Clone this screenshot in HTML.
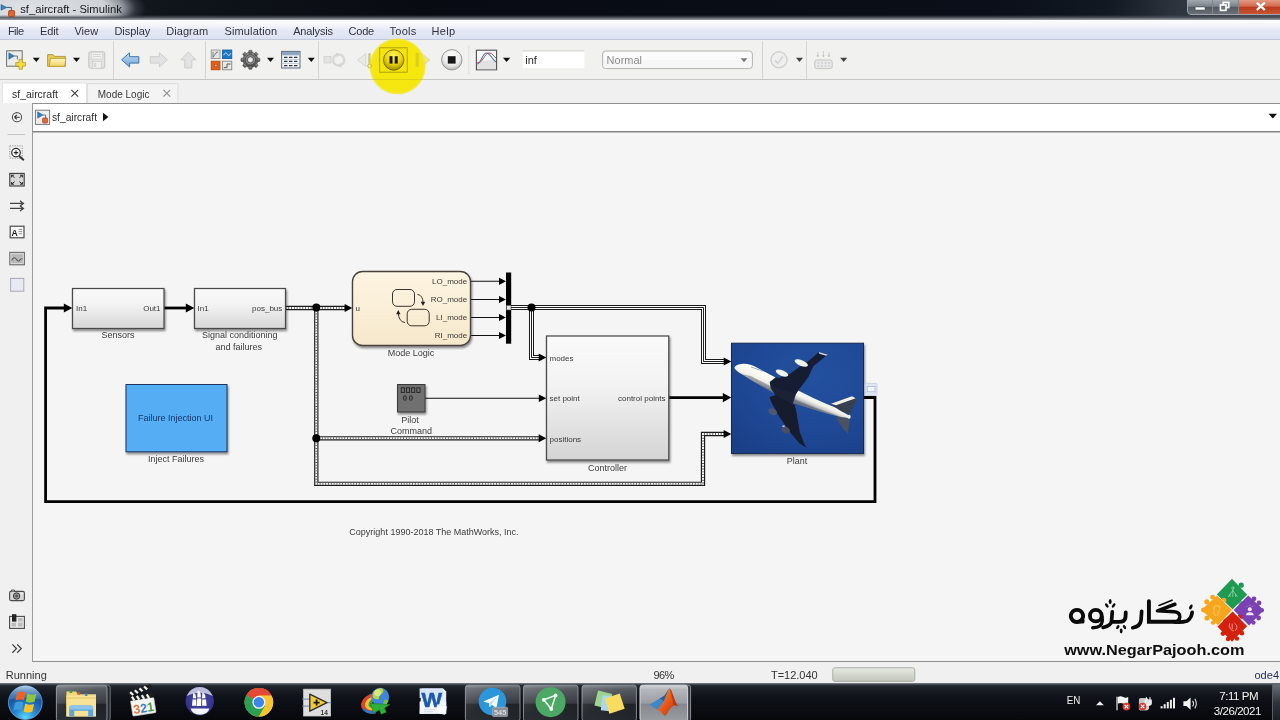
<!DOCTYPE html>
<html>
<head>
<meta charset="utf-8">
<title>sf_aircraft - Simulink</title>
<style>
*{box-sizing:border-box;margin:0;padding:0}
html,body{width:1280px;height:720px;overflow:hidden;background:#f0f0f0;font-family:"Liberation Sans",sans-serif;}
#root{position:relative;width:1280px;height:720px;overflow:hidden;background:#f0f0f0}
.abs{position:absolute}
svg{will-change:transform}
/* ---------- title bar ---------- */
#titlebar{position:absolute;left:0;top:0;width:1280px;height:20px;overflow:hidden;background:linear-gradient(90deg,#20252c 0,#10141b 170px,#080b12 420px,#0a0f19 1000px,#131922 1110px,#2b323c 1170px,#474d55 1280px);}
#titleglow{position:absolute;left:-90px;top:-24px;width:236px;height:64px;background:radial-gradient(ellipse 50% 50% at 50% 50%,rgba(228,231,235,.97) 0,rgba(216,220,225,.95) 66%,rgba(176,182,190,.8) 80%,rgba(96,102,112,.4) 91%,rgba(20,24,30,0) 100%);}
#titleborder{position:absolute;left:0;top:15px;width:1280px;height:5px;background:linear-gradient(rgba(60,65,72,0) 0,rgba(75,80,88,.85) 45%,#7d8289 80%,#a4a8ae 100%)}

/* ---------- menu bar ---------- */
#menubar{position:absolute;left:0;top:20px;width:1280px;height:20px;background:linear-gradient(#fcfdfe 0,#f3f5fb 30%,#e4e8f5 55%,#dde2f3 100%);border-bottom:1px solid #c3c8dc}

/* ---------- toolbar ---------- */
#toolbar{position:absolute;left:0;top:41px;width:1280px;height:39px;background:#f1f1ef;border-bottom:1px solid #c6c6c6}
.tsep{position:absolute;top:0;width:1px;height:38px;background:#d4d4d4}
/* ---------- tabs ---------- */
#tabrow{position:absolute;left:0;top:80px;width:1280px;height:24px;background:#f0f0f0}
/* ---------- left palette ---------- */
#palette{position:absolute;left:0;top:104px;width:33px;height:556px;background:#f0f0f0}
/* ---------- breadcrumb ---------- */
#crumb{position:absolute;left:32px;top:103px;width:1248px;height:28px;background:#fff;border-left:1px solid #9a9a9a;border-top:1px solid #8f8f8f}
/* ---------- canvas ---------- */
#canvas{position:absolute;left:32px;top:131px;width:1248px;height:531px;background:#f5f5f5;border-left:1px solid #9b9b9b;border-top:1px solid #858585;border-bottom:1px solid #8c8c8c;box-shadow:inset 0 1px 0 #bdbdbd}
/* ---------- status bar ---------- */
#status{position:absolute;left:0;top:662px;width:1280px;height:22px;background:#f0f0f0}
#status span{position:absolute;top:6px;font-size:11.5px;color:#333;white-space:nowrap}
/* ---------- taskbar ---------- */
#taskbar{position:absolute;left:0;top:683px;width:1280px;height:37px;background:linear-gradient(#8a9098 0,#4a5058 3%,#20242b 8%,#0e1117 40%,#06080c 100%)}
</style>
</head>
<body>
<div id="root">

<!-- TITLE BAR + MENU BAR -->
<div id="menubar"></div>
<div id="titlebar"><div id="titleglow"></div></div>
<div id="titleborder"></div>
<svg class="abs" style="left:0;top:0" width="1280" height="41" viewBox="0 0 1280 41" font-family="Liberation Sans, sans-serif">
<defs>
<linearGradient id="gwb" x1="0" y1="0" x2="0" y2="1"><stop offset="0" stop-color="#a4a9b0"/><stop offset=".45" stop-color="#7d838b"/><stop offset=".5" stop-color="#545a63"/><stop offset="1" stop-color="#6a7078"/></linearGradient>
<linearGradient id="gwx" x1="0" y1="0" x2="0" y2="1"><stop offset="0" stop-color="#e59a84"/><stop offset=".45" stop-color="#d2694c"/><stop offset=".5" stop-color="#b93a1e"/><stop offset="1" stop-color="#c8552f"/></linearGradient>
</defs>
<!-- title icon -->
<path d="M1 4.6l5.8 2.8L1 10.2z" fill="#2f86cc" stroke="#1d5e98" stroke-width=".6"/>
<path d="M6.8 7.4h4.6v3.4" fill="none" stroke="#444" stroke-width=".9"/>
<rect x="8.6" y="10.6" width="6" height="6" rx=".8" fill="#e0682f" stroke="#9c3f14" stroke-width=".8"/>
<text x="20.2" y="12.8" font-size="11.2" fill="#16181c" textLength="101.6" lengthAdjust="spacingAndGlyphs">sf_aircraft - Simulink</text>
<!-- window buttons -->
<path d="M1187 0V11q0 4 4 4H1280V0z" fill="#2b3038" opacity=".9"/>
<path d="M1188 0V10.6q0 3.4 3.4 3.4H1212V0z" fill="url(#gwb)"/>
<rect x="1213" y="0" width="25" height="14" fill="url(#gwb)"/>
<rect x="1239" y="0" width="41" height="14" fill="url(#gwx)"/>
<path d="M1187.5 0V11q0 3.5 3.5 3.5H1280" fill="none" stroke="#c9ccd1" stroke-width="1" opacity=".75"/>
<path d="M1212.5 0V14M1238.5 0V14" stroke="#c9ccd1" stroke-width="1" opacity=".55"/>
<rect x="1195.2" y="7" width="9.8" height="3" rx=".6" fill="#fff" stroke="#3a3f46" stroke-width=".5"/>
<g fill="none" stroke="#fff" stroke-width="1.6"><rect x="1223.2" y="2.4" width="5.6" height="5.2"/><rect x="1220.4" y="5" width="5.6" height="5.4" fill="#6b7179"/></g>
<path d="M1256.8 2.6l8 7.4M1264.8 2.6l-8 7.4" stroke="#fff" stroke-width="2.3"/>
<!-- menu text -->
<g font-size="11" fill="#34343f" lengthAdjust="spacingAndGlyphs">
<text x="7.9" y="34.6" textLength="16.2">File</text>
<text x="40" y="34.6" textLength="18.6">Edit</text>
<text x="74.4" y="34.6" textLength="23.8">View</text>
<text x="114.4" y="34.6" textLength="35.8">Display</text>
<text x="166.3" y="34.6" textLength="41.8">Diagram</text>
<text x="224.4" y="34.6" textLength="52.8">Simulation</text>
<text x="293.2" y="34.6" textLength="39.8">Analysis</text>
<text x="348.4" y="34.6" textLength="25.8">Code</text>
<text x="389.6" y="34.6" textLength="26.6">Tools</text>
<text x="431.4" y="34.6" textLength="23.8">Help</text>
</g>
</svg>


<!-- TOOLBAR -->
<div id="toolbar">
<div class="tsep" style="left:113px"></div>
<div class="tsep" style="left:205px"></div>
<div class="tsep" style="left:318px"></div>
<div class="tsep" style="left:762px"></div>
<div class="tsep" style="left:806px"></div>
</div>

<!-- TABS -->
<div id="tabrow"></div>

<!-- PALETTE -->
<div id="palette"></div>

<!-- BREADCRUMB -->
<div id="crumb"></div>

<!-- CANVAS -->
<div id="canvas"></div>

<!-- DIAGRAM -->
<svg id="diagram" class="abs" style="left:0;top:0" width="1280" height="720" viewBox="0 0 1280 720" font-family="Liberation Sans, sans-serif">
<defs>
<linearGradient id="gblk" x1="0" y1="0" x2="0" y2="1"><stop offset="0" stop-color="#fbfbfb"/><stop offset=".45" stop-color="#f1f1f1"/><stop offset="1" stop-color="#d6d6d6"/></linearGradient>
<linearGradient id="gctl" x1="0" y1="0" x2="0" y2="1"><stop offset="0" stop-color="#fafafa"/><stop offset=".4" stop-color="#f3f3f3"/><stop offset="1" stop-color="#d4d4d4"/></linearGradient>
<linearGradient id="gsf" x1="0" y1="0" x2="0" y2="1"><stop offset="0" stop-color="#fdf4e2"/><stop offset="1" stop-color="#f6e8cb"/></linearGradient>
<filter id="sh" x="-10%" y="-10%" width="125%" height="130%"><feGaussianBlur in="SourceAlpha" stdDeviation="1.2"/><feOffset dx="1.2" dy="1.5"/><feComponentTransfer><feFuncA type="linear" slope=".45"/></feComponentTransfer><feMerge><feMergeNode/><feMergeNode in="SourceGraphic"/></feMerge></filter>
</defs>

<!-- feedback loop (thick) -->
<g fill="none" stroke="#000" stroke-width="2.8" stroke-linejoin="miter">
<path d="M863.5 397.5H875V501.6H45.6V308H66"/>
<path d="M164 308H188"/>
<path d="M669 397.6H724"/>
</g>
<g fill="#000">
<path d="M72.3 308l-8.5-4.6v9.2z"/>
<path d="M194.3 308l-8.5-4.6v9.2z"/>
<path d="M731.3 397.6l-8.5-4.6v9.2z"/>
</g>

<!-- dotted bus -->
<g fill="none" stroke-linejoin="miter">
<g stroke="#1a1a1a" stroke-width="4.3">
<path d="M285.5 308H346"/>
<path d="M316.3 308V483.8H703V434H725"/>
<path d="M316.3 438.3H540"/>
</g>
<g stroke="#fff" stroke-width="2">
<path d="M285.5 308H346"/>
<path d="M316.3 308V483.8H703V434H725"/>
<path d="M316.3 438.3H540"/>
</g>
<g stroke="#5a5a5a" stroke-width="2" stroke-dasharray="0.9 1.9">
<path d="M285.5 308H346"/>
<path d="M316.3 308V483.8H703V434H725"/>
<path d="M316.3 438.3H540"/>
</g>
</g>
<g fill="#000">
<path d="M352.3 308l-7.6-4v8z"/>
<path d="M546.3 438.3l-7.6-4v8z"/>
<path d="M731.3 434l-7.6-4v8z"/>
<circle cx="316.3" cy="307.6" r="4"/>
<circle cx="316.3" cy="438.3" r="4"/>
</g>

<!-- triple (bus) line -->
<g fill="none" stroke-linejoin="miter">
<g stroke="#1a1a1a" stroke-width="5"><path d="M511 307.5H703.5V361.5H725"/><path d="M531.5 307.5V357.5H540"/></g>
<g stroke="#fff" stroke-width="3"><path d="M511 307.5H703.5V361.5H725"/><path d="M531.5 307.5V357.5H540"/></g>
<g stroke="#222" stroke-width="1"><path d="M511 307.5H703.5V361.5H725"/><path d="M531.5 307.5V357.5H540"/></g>
</g>
<g fill="#000">
<path d="M731.3 361.5l-7.6-4v8z"/>
<path d="M546.3 357.5l-7.6-4v8z"/>
<circle cx="531.5" cy="307.5" r="4"/>
</g>

<!-- thin signal lines -->
<g fill="none" stroke="#111" stroke-width="1.1">
<path d="M470.5 281.3H500M470.5 299.5H500M470.5 317.5H500M470.5 335.5H500"/>
<path d="M425 398.3H540"/>
</g>
<g fill="#000">
<path d="M506 281.3l-7-3.6v7.2z"/>
<path d="M506 299.5l-7-3.6v7.2z"/>
<path d="M506 317.5l-7-3.6v7.2z"/>
<path d="M506 335.5l-7-3.6v7.2z"/>
<path d="M546.3 398.3l-7.5-3.8v7.6z"/>
</g>

<!-- Mux -->
<rect x="506" y="272.5" width="5.2" height="71.2" fill="#000"/>
<rect x="506.6" y="305.4" width="4.4" height="4.6" fill="#e8e8e8" stroke="#555" stroke-width=".6"/>

<!-- blocks -->
<g filter="url(#sh)">
<rect x="72.5" y="288.5" width="91.5" height="40" fill="url(#gblk)" stroke="#484848" stroke-width="1.25"/>
<rect x="194.5" y="288.5" width="91" height="40" fill="url(#gblk)" stroke="#484848" stroke-width="1.25"/>
<rect x="546.5" y="336" width="122.3" height="124" fill="url(#gctl)" stroke="#484848" stroke-width="1.25"/>
<rect x="352.5" y="271.5" width="118" height="74" rx="10" ry="10" fill="url(#gsf)" stroke="#46413a" stroke-width="1.35"/>
<rect x="126" y="384.5" width="101" height="67.3" fill="#55adf3" stroke="#1c3461" stroke-width="1"/>
<rect x="397.5" y="384.5" width="27.5" height="27.5" fill="#707070" stroke="#383838" stroke-width="1"/>
<rect x="731.5" y="343.2" width="132" height="110.2" fill="#1f4a98" stroke="#15274d" stroke-width="1"/>
</g>

<!-- plant badge -->
<rect x="865.2" y="383.400" width="11.800" height="12" rx="1" fill="#dfe7f4" stroke="#c2cde0" stroke-width=".8"/>
<rect x="867.200" y="386.400" width="7.800" height="5.400" fill="#f2f6fb" stroke="#a9b9d4" stroke-width=".8"/>
<!-- stateflow icon -->
<g fill="none" stroke="#3a362c" stroke-width="1">
<rect x="392.5" y="289.5" width="22" height="16.8" rx="4.5"/>
<rect x="407.2" y="309.3" width="22" height="16.5" rx="4.5"/>
<path d="M417.5 294.3Q423.2 295.5 423 303"/>
<path d="M405 322.6Q398.6 321.5 398.3 313"/>
</g>
<path d="M423 306l-2.2-4.2h4.4z" fill="#222"/>
<path d="M398.3 310l-2.2 4.2h4.4z" fill="#222"/>

<!-- pilot command display -->
<g fill="none" stroke="#222" stroke-width=".9">
<rect x="401.2" y="387.8" width="3.2" height="4.6"/><rect x="406.4" y="387.8" width="3.2" height="4.6"/><rect x="411.6" y="387.8" width="3.2" height="4.6"/><rect x="416.8" y="387.8" width="3.2" height="4.6"/>
<rect x="403.6" y="395.8" width="2.6" height="4.4" rx="1"/><rect x="409.6" y="395.8" width="2.6" height="4.4" rx="1"/>
</g>

<!-- text -->
<g font-size="8" fill="#3a3a3a">
<text x="76" y="311">In1</text>
<text x="160.5" y="311" text-anchor="end">Out1</text>
<text x="197.5" y="311">In1</text>
<text x="282.3" y="311" text-anchor="end">pos_bus</text>
<text x="355.5" y="311">u</text>
<text x="467.2" y="284.2" text-anchor="end">LO_mode</text>
<text x="467.2" y="302.4" text-anchor="end">RO_mode</text>
<text x="467.2" y="320.4" text-anchor="end">LI_mode</text>
<text x="467.2" y="338.4" text-anchor="end">RI_mode</text>
<text x="549.5" y="360.7">modes</text>
<text x="549.5" y="401.2">set point</text>
<text x="549.5" y="441.7">positions</text>
<text x="665.6" y="401.2" text-anchor="end">control points</text>
</g>
<g font-size="9" fill="#3c3c3c" text-anchor="middle">
<text x="118" y="338.4">Sensors</text>
<text x="239.8" y="338.4">Signal conditioning</text>
<text x="238.8" y="349.8">and failures</text>
<text x="176" y="462">Inject Failures</text>
<text x="411" y="355.6">Mode Logic</text>
<text x="410" y="422.8">Pilot</text>
<text x="411.2" y="433.6">Command</text>
<text x="607.5" y="471">Controller</text>
<text x="797" y="464.4">Plant</text>
<text x="434" y="535.3">Copyright 1990-2018 The MathWorks, Inc.</text>
<text x="175.5" y="421.2" fill="#163768">Failure Injection UI</text>
</g>
</svg>

<!-- PLANE PHOTO -->
<svg class="abs" style="left:732px;top:343.7px" width="131" height="109.2" viewBox="36 34 786 655" preserveAspectRatio="none">
<defs>
<radialGradient id="sky" cx=".62" cy=".3" r=".85"><stop offset="0" stop-color="#23519f"/><stop offset=".55" stop-color="#1f4996"/><stop offset="1" stop-color="#1a3f87"/></radialGradient>
<linearGradient id="fus" gradientUnits="userSpaceOnUse" x1="0" y1="108" x2="-33" y2="187"><stop offset="0" stop-color="#fdfcf5"/><stop offset=".6" stop-color="#f3f2ea"/><stop offset=".82" stop-color="#c4c6c8"/><stop offset="1" stop-color="#7d8492"/></linearGradient>
<filter id="pblur" x="-5%" y="-5%" width="110%" height="110%"><feGaussianBlur stdDeviation="3.2"/></filter>
</defs>
<rect x="36" y="34" width="786" height="655" fill="url(#sky)"/>
<g filter="url(#pblur)">
<!-- far stabilizer -->
<path d="M660 468L742 478L732 572L700 540L672 498Z" fill="#4a5162"/>
<!-- lower (near) wing -->
<path d="M262 352L305 338L412 398L424 450L442 560L472 640L484 658L440 630L380 558L318 468L272 384Z" fill="#141b2e"/>
<ellipse cx="280" cy="440" rx="26" ry="18" transform="rotate(25 280 440)" fill="#4e586d"/>
<ellipse cx="358" cy="550" rx="26" ry="20" transform="rotate(30 358 550)" fill="#465066"/>
<ellipse cx="345" cy="528" rx="9" ry="6" fill="#aeb4bf"/>
<!-- fuselage -->
<path d="M50 176Q58 158 100 153Q140 150 190 178L300 236L430 312L520 356L600 392L660 416L712 448L745 468L742 480L690 472L600 450L520 426L440 400L380 380L300 336L230 296L160 256L95 216Q60 196 50 176Z" fill="url(#fus)"/>
<!-- belly shadow -->
<path d="M95 216L160 256L230 296L300 336L380 380L440 400L520 426L600 450L690 472L640 452L540 418L440 380L330 322L240 272L150 226Z" fill="#59606f" opacity=".45"/>
<!-- wing root dark band -->
<path d="M262 262L300 232L440 300L420 336L400 392L300 346L268 300Z" fill="#1a2236"/>
<!-- upper (far) wing -->
<path d="M282 256L330 232L384 212L440 172L500 132L556 84L612 98L592 112L524 168L494 232L442 302L418 332L300 300L268 270Z" fill="#161e33"/>
<path d="M556 82L612 98L600 104L560 92Z" fill="#cfd5e0"/>
<!-- upper engines -->
<ellipse cx="336" cy="208" rx="40" ry="17" transform="rotate(22 336 208)" fill="#f3f2ea"/>
<ellipse cx="452" cy="148" rx="42" ry="17" transform="rotate(22 452 148)" fill="#f3f2ea"/>
<!-- cockpit windows hint -->
<path d="M150 172L225 198" stroke="#5d79b5" stroke-width="5" fill="none" opacity=".7"/>
<!-- tail fin -->
<path d="M630 392L756 348L786 366L742 456L700 442L652 412Z" fill="#39404f"/>
<path d="M630 392L756 348L778 360L660 402Z" fill="#f2f2ec"/>
<ellipse cx="738" cy="470" rx="10" ry="12" fill="#f2f1ea"/>
</g>
</svg>

<!-- TOOLBAR ICONS + TABS + CRUMB -->
<svg id="tb" class="abs" style="left:0;top:0" width="1280" height="135" viewBox="0 0 1280 135" font-family="Liberation Sans, sans-serif">
<defs>
<linearGradient id="gfold" x1="0" y1="0" x2="0" y2="1"><stop offset="0" stop-color="#fff6c8"/><stop offset="1" stop-color="#f0d060"/></linearGradient>
<linearGradient id="gback" x1="0" y1="0" x2="0" y2="1"><stop offset="0" stop-color="#c6def2"/><stop offset="1" stop-color="#6fa3d6"/></linearGradient>
<radialGradient id="gstop" cx=".5" cy=".35" r=".7"><stop offset="0" stop-color="#ffffff"/><stop offset=".6" stop-color="#ececec"/><stop offset="1" stop-color="#a8a8a8"/></radialGradient>
<radialGradient id="gpause" cx=".5" cy=".3" r=".75"><stop offset="0" stop-color="#fff26a"/><stop offset=".55" stop-color="#e8d400"/><stop offset="1" stop-color="#8d7f00"/></radialGradient>
<radialGradient id="gyel" cx=".5" cy=".5" r=".5"><stop offset="0" stop-color="#f6e70a"/><stop offset=".9" stop-color="#f5e610"/><stop offset=".97" stop-color="#f5e610" stop-opacity=".7"/><stop offset="1" stop-color="#f5e610" stop-opacity="0"/></radialGradient>
<linearGradient id="ggear" x1="0" y1="0" x2="0" y2="1"><stop offset="0" stop-color="#9a9a9a"/><stop offset="1" stop-color="#4a4a4a"/></linearGradient>
</defs>

<!-- new model -->
<rect x="6.6" y="50.8" width="15.6" height="15.4" fill="#ececec" stroke="#6e6e6e" stroke-width="1"/>
<path d="M8.8 52.8l5.6 3.2-5.6 3.2z" fill="#2d7fc4" stroke="#1d5e98" stroke-width=".5"/>
<path d="M14.4 56h3v3.4" fill="none" stroke="#555" stroke-width=".8"/>
<path d="M19 59.4h3.4v3.2h3.2v3.4h-3.2v3.2H19v-3.2h-3.2v-3.4H19z" fill="#f5dc4a" stroke="#b89a18" stroke-width=".8"/>
<path d="M32.8 57.8h7l-3.5 4.2z" fill="#111"/>
<!-- open folder -->
<path d="M47.6 66.4V54.6h5.4l1.6 1.8h10.8v10z" fill="#e9c94f" stroke="#a88c28" stroke-width=".8"/>
<path d="M49.2 66.4l1.2-8h15.6l-1.4 8z" fill="url(#gfold)" stroke="#b39a34" stroke-width=".8"/>
<path d="M73 57.8h7l-3.5 4.2z" fill="#111"/>
<!-- save (disabled) -->
<g opacity=".75">
<rect x="88.8" y="51.8" width="16" height="16.4" rx="1.5" fill="#dcdcdc" stroke="#b4b4b4" stroke-width="1"/>
<rect x="91.4" y="52.6" width="10.8" height="6.4" fill="#f2f2f2" stroke="#c0c0c0" stroke-width=".6"/>
<path d="M92.6 54.6h8.4M92.6 56.6h8.4" stroke="#bdbdbd" stroke-width=".8"/>
<rect x="92.4" y="61.6" width="8.8" height="6.6" fill="#efefef" stroke="#bcbcbc" stroke-width=".6"/>
<rect x="93.6" y="62.8" width="2.6" height="4.4" fill="#cfcfcf"/>
</g>
<!-- back / fwd / up -->
<path d="M121.6 59.8l8-7v3.9h9.2v6.4h-9.2v3.9z" fill="url(#gback)" stroke="#3f72a8" stroke-width="1" stroke-linejoin="round"/>
<path d="M167.4 59.8l-8-7v3.9h-9.2v6.4h9.2v3.9z" fill="#e2e2e2" stroke="#cdcdcd" stroke-width="1" stroke-linejoin="round"/>
<path d="M188.3 51.8l7.4 8h-3.9v8.2h-7v-8.2h-3.9z" fill="#e2e2e2" stroke="#cdcdcd" stroke-width="1" stroke-linejoin="round"/>
<!-- library browser -->
<rect x="211.2" y="50" width="8.8" height="8.6" fill="#e4e4e4" stroke="#8a8a8a" stroke-width=".8"/>
<path d="M213 57.4v-5.6M213 57.4l3-4.6 1.2 0v-1.4" fill="none" stroke="#666" stroke-width=".8"/>
<rect x="222.4" y="50" width="9.4" height="8.6" fill="#1e78c8" stroke="#135a9c" stroke-width=".8"/>
<path d="M223.6 55.2q1.8-4 3.6-1t3.6-1" fill="none" stroke="#bfe0ff" stroke-width="1"/>
<rect x="211.2" y="61.2" width="8.8" height="8.6" fill="#e4601a" stroke="#b24308" stroke-width=".8"/>
<rect x="214.4" y="64.2" width="2.6" height="2.6" fill="#f9b48a" stroke="#a03a04" stroke-width=".5"/>
<rect x="222.4" y="61.2" width="9.4" height="8.6" fill="#e8e8e8" stroke="#7c7c7c" stroke-width=".8"/>
<path d="M223.8 67.6h3.2v-3.6h3.6" fill="none" stroke="#555" stroke-width="1"/>
<!-- gear -->
<g transform="translate(250.4 59.8)">
<g fill="url(#ggear)" stroke="#3c3c3c" stroke-width=".5">
<circle r="7.6"/>
<g id="teeth"><rect x="-1.7" y="-9.5" width="3.4" height="3" rx=".8"/><rect x="-1.7" y="6.5" width="3.4" height="3" rx=".8"/><rect x="-9.5" y="-1.7" width="3" height="3.4" rx=".8"/><rect x="6.5" y="-1.7" width="3" height="3.4" rx=".8"/></g>
<use href="#teeth" transform="rotate(45)"/>
</g>
<circle r="5.2" fill="#8c8c8c" stroke="#3a3a3a" stroke-width=".7"/>
<circle r="3.1" fill="#d9d9d9" stroke="#444" stroke-width=".8"/>
<circle r="1.5" fill="#f4f4f4"/>
</g>
<path d="M267 57.8h7l-3.5 4.2z" fill="#111"/>
<!-- model explorer -->
<rect x="281.6" y="51.4" width="18.4" height="16.6" fill="#f4f6f8" stroke="#5a6a7e" stroke-width="1"/>
<rect x="282.1" y="51.9" width="17.4" height="3.4" fill="#8fa6c0"/>
<path d="M281.6 59.4h18.4M281.6 63.4h18.4" stroke="#a9b8c9" stroke-width=".7"/>
<path d="M284 57.4h3.4M289 57.4h3.4M294 57.4h3.4M284 61.4h3.4M289 61.4h3.4M294 61.4h3.4M284 65.6h3.4M289 65.6h3.4M294 65.6h3.4" stroke="#2b3440" stroke-width="1.2"/>
<path d="M307.8 57.8h7l-3.5 4.2z" fill="#111"/>
<!-- update diagram (disabled) -->
<g opacity=".8">
<rect x="324" y="56.4" width="7" height="6.6" fill="#e0e0e0" stroke="#c9c9c9" stroke-width=".8"/>
<circle cx="338.6" cy="60" r="5.6" fill="none" stroke="#d2d2d2" stroke-width="2.4"/>
<path d="M336 52.4l4.4 2.2-3.8 2.8zM341.4 67.8l-4.4-2.2 3.8-2.8z" fill="#d0d0d0"/>
</g>
<!-- step back (disabled) -->
<path d="M357.4 60l8.4-6.4v12.8z" fill="#e8e8e8" stroke="#d2d2d2" stroke-width=".8"/>
<rect x="368.2" y="53.2" width="2.4" height="10.4" fill="#d4d4d4"/>
<circle cx="369.6" cy="66" r="2" fill="none" stroke="#cfcfcf" stroke-width="1"/>
<!-- step fwd (disabled) -->
<rect x="415.6" y="53" width="3.2" height="13.6" fill="#dcdcdc"/>
<path d="M430 60l-8.6-6.6v13.2z" fill="#e8e8e8" stroke="#d2d2d2" stroke-width=".8"/>
<!-- yellow cursor highlight -->
<circle cx="397.6" cy="66.4" r="28.4" fill="url(#gyel)"/>
<!-- faint things visible through yellow -->
<path d="M357.4 60l8.4-6.4v12.8z" fill="#e9de3c" opacity=".0"/>
<rect x="368.4" y="53.2" width="2.2" height="10.4" fill="#cfc328" opacity=".6"/>
<circle cx="369.8" cy="66" r="2" fill="none" stroke="#bfb320" stroke-width="1" opacity=".7"/>
<rect x="415.6" y="53" width="3.2" height="13.6" fill="#d6c91c" opacity=".8"/>
<path d="M424 55l5.6 5-5.6 5" fill="#efe24a" opacity=".55"/>
<path d="M373 79.5h49.4" stroke="#d8cb1a" stroke-width="1" opacity=".8"/>
<!-- pause button -->
<rect x="379.6" y="47.8" width="27.6" height="24.4" fill="#f2e000" fill-opacity=".25" stroke="#a89a12" stroke-width=".9"/>
<circle cx="393.7" cy="60" r="10.2" fill="url(#gpause)" stroke="#6e6400" stroke-width=".9"/>
<rect x="389.5" y="56.2" width="3" height="7.4" fill="#1a1700"/>
<rect x="394.7" y="56.2" width="3" height="7.4" fill="#1a1700"/>
<!-- stop -->
<circle cx="451.8" cy="59.8" r="10.2" fill="url(#gstop)" stroke="#8e8e8e" stroke-width=".9"/>
<rect x="447.8" y="56.2" width="7.8" height="7.4" fill="#161616"/>
<path d="M468.8 45.6v28.8" stroke="#dcdcdc" stroke-width="1"/>
<!-- scope -->
<rect x="476.4" y="50.2" width="20.2" height="19.6" fill="#fafafa" stroke="#4c4c4c" stroke-width="1.1"/>
<path d="M477 62l19 -3v10.2h-19z" fill="#e2e2e2"/>
<path d="M477.4 64c4-1 5-11 9-11s5 6 9.6 9" fill="none" stroke="#3b76b4" stroke-width="1.1"/>
<path d="M477.4 62.4c5 2 7-9.4 11.4-9.4s4 3 7.2 5" fill="none" stroke="#c24a4a" stroke-width="1"/>
<path d="M503 57.8h7.2l-3.6 4.2z" fill="#111"/>
<!-- inf box -->
<rect x="522.6" y="51" width="61.8" height="17" fill="#fff"/>
<path d="M522.6 50.9h61.8" stroke="#cfcfcf" stroke-width="1"/>
<text x="525.2" y="64.4" font-size="11" fill="#2a2a2a">inf</text>
<!-- normal combo -->
<rect x="602.6" y="51" width="149.8" height="17.6" rx="3" fill="#f6f6f6" stroke="#b3b3b3" stroke-width="1"/>
<rect x="603.6" y="52" width="147.8" height="8" rx="2" fill="#fbfbfb"/>
<text x="606.6" y="64.4" font-size="11" fill="#8c8c8c">Normal</text>
<path d="M740.6 58.2h6.8l-3.4 4z" fill="#7a7a7a"/>
<!-- check -->
<circle cx="779" cy="59.8" r="8" fill="#efefef" stroke="#d0d0d0" stroke-width="1.4"/>
<path d="M775 60.4l2.8 3 5-7" fill="none" stroke="#d4d4d4" stroke-width="1.6"/>
<path d="M796 57.8h7l-3.5 4.2z" fill="#444"/>
<!-- keyboard thing -->
<rect x="814.8" y="60" width="17.4" height="8.6" rx="2" fill="#eaeaea" stroke="#c4c4c4" stroke-width="1"/>
<path d="M817.4 63h2M821 63h2M824.6 63h2M828.2 63h2M817.4 66h2M821 66h2M824.6 66h2M828.2 66h2" stroke="#bdbdbd" stroke-width="1.2"/>
<path d="M817.8 52v5M823.4 51v6M829 52v5" stroke="#cdcdcd" stroke-width="1"/>
<path d="M816.4 55.2h2.8l-1.4 2zM822 55.2h2.8l-1.4 2zM827.6 55.2h2.8l-1.4 2z" fill="#c4c4c4"/>
<path d="M840.2 57.8h7l-3.5 4.2z" fill="#444"/>

<!-- TABS -->
<rect x="2.6" y="83" width="84" height="20" fill="#fff"/>
<path d="M2.6 103V83h84v20" fill="none" stroke="#e2e2e2" stroke-width="1"/>
<path d="M87.6 103V83.6h90.4V103z" fill="#f4f4f4"/><path d="M87.6 103V83.6h90.4V103" fill="none" stroke="#dcdcdc" stroke-width="1"/>
<text x="12" y="98" font-size="11" fill="#2e2e2e" textLength="46" lengthAdjust="spacingAndGlyphs">sf_aircraft</text>
<path d="M71.4 89.8l6.8 6.8M78.2 89.8l-6.8 6.8" stroke="#3c3c3c" stroke-width="1.1"/>
<text x="97.8" y="98.4" font-size="11" fill="#3a3a3a" textLength="51.6" lengthAdjust="spacingAndGlyphs">Mode Logic</text>
<path d="M163.4 89.8l6.8 6.8M170.2 89.8l-6.8 6.8" stroke="#8e8e8e" stroke-width="1.1"/>

<!-- CRUMB -->
<circle cx="17" cy="117.2" r="4.6" fill="#f4f4f4" stroke="#555" stroke-width="1.1"/>
<path d="M14.4 117.2h5.4M14.4 117.2l2.4-2.2M14.4 117.2l2.4 2.2" fill="none" stroke="#333" stroke-width="1.1"/>
<rect x="35.4" y="110.2" width="14.2" height="14.2" fill="#eeeeee" stroke="#7a7a7a" stroke-width="1"/>
<path d="M37.6 111.8l5.4 3.2-5.4 3.2z" fill="#2d7fc4" stroke="#1d5e98" stroke-width=".5"/>
<path d="M43 115h2.6v3" fill="none" stroke="#555" stroke-width=".8"/>
<rect x="42.6" y="118" width="5" height="5" rx=".8" fill="#e06a38" stroke="#a8431a" stroke-width=".7"/>
<text x="52" y="121.2" font-size="11" fill="#2e2e2e" textLength="45" lengthAdjust="spacingAndGlyphs">sf_aircraft</text>
<path d="M103 112.8l5.4 4.2-5.4 4.2z" fill="#111"/>
<path d="M1268.6 113.8h8.4l-4.2 4.6z" fill="#111"/>
</svg>

<!-- STATUS -->
<div id="status"></div>

<!-- PALETTE ICONS + STATUS -->
<svg class="abs" style="left:0;top:0" width="1280" height="720" viewBox="0 0 1280 720" font-family="Liberation Sans, sans-serif">
<path d="M7.5 134.5h17.5" stroke="#c4c4c4" stroke-width="1"/>
<!-- zoom -->
<rect x="9.8" y="145.8" width="12.4" height="12.4" fill="none" stroke="#888" stroke-width=".9" stroke-dasharray="1.2 1.2"/>
<circle cx="16" cy="152.6" r="4.3" fill="#fafafa" stroke="#333" stroke-width="1.2"/>
<path d="M13.8 152.6h4.4M16 150.4v4.4" stroke="#222" stroke-width="1.1"/>
<path d="M19.2 156l4.6 4.2" stroke="#333" stroke-width="2"/>
<!-- fit -->
<rect x="9.8" y="173.4" width="14.4" height="12.6" fill="#d8d8d8" stroke="#3a3a3a" stroke-width="1.1"/>
<g stroke="#2c2c2c" stroke-width="1" fill="none">
<path d="M11.6 175.2l3 2.6M11.6 175.2h2.4M11.6 175.2v2.2"/>
<path d="M22.4 175.2l-3 2.6M22.4 175.2h-2.4M22.4 175.2v2.2"/>
<path d="M11.6 184.2l3-2.6M11.6 184.2h2.4M11.6 184.2v-2.2"/>
<path d="M22.4 184.2l-3-2.6M22.4 184.2h-2.4M22.4 184.2v-2.2"/>
</g>
<!-- arrows -->
<g stroke="#444" stroke-width="1.3" fill="none">
<path d="M10 203.4h13M20 200.8l3.4 2.6-3.4 2.6"/>
<path d="M10 208.4h13M20 205.8l3.4 2.6-3.4 2.6"/>
</g>
<!-- text A -->
<rect x="10.2" y="226.2" width="13.8" height="11.6" fill="#fafafa" stroke="#3c3c3c" stroke-width="1.1"/>
<text x="11.6" y="235.6" font-size="8.6" font-weight="700" fill="#1a1a1a">A</text>
<path d="M18.6 229.4h3.6M18.6 231.6h3.6M18.6 233.8h3.6" stroke="#8a8a8a" stroke-width=".9"/>
<!-- image -->
<rect x="9.8" y="252.4" width="14.6" height="12.4" fill="#c9c9c9" stroke="#6a6a6a" stroke-width="1.1"/>
<rect x="11" y="253.6" width="12.2" height="10" fill="#b9b9b9" stroke="#e6e6e6" stroke-width=".6"/>
<path d="M11.6 260.4q2.4-4.6 4.6-1.4t3.2 1.4 3 -1.6" fill="none" stroke="#555" stroke-width="1.1"/>
<!-- rect -->
<rect x="10.6" y="278.4" width="13.2" height="12.8" fill="#e9e9f5" stroke="#a8a8b4" stroke-width="1"/>
<!-- camera -->
<rect x="9.6" y="591.4" width="14.8" height="9.2" rx="1.6" fill="#d6d6d6" stroke="#4a4a4a" stroke-width="1.1"/>
<path d="M11.4 591.4v-1.4h3v1.4" fill="#ccc" stroke="#4a4a4a" stroke-width=".9"/>
<circle cx="16.6" cy="596" r="3.2" fill="#9a9a9a" stroke="#3a3a3a" stroke-width="1"/>
<circle cx="16.6" cy="596" r="1.4" fill="#555"/>
<rect x="20.6" y="592.8" width="2.4" height="1.6" fill="#f4f4f4"/>
<!-- viewmarks -->
<rect x="9.6" y="616.4" width="14.8" height="12" fill="#ececec" stroke="#4a4a4a" stroke-width="1.1"/>
<rect x="12" y="614.2" width="4.4" height="7.4" fill="#222"/>
<rect x="11.6" y="622.6" width="4.6" height="4" fill="#bdbdbd"/>
<rect x="18" y="618" width="4.6" height="3.6" fill="#bdbdbd"/>
<rect x="18" y="622.6" width="4.6" height="4" fill="#bdbdbd"/>
<!-- chevrons -->
<path d="M12.4 644.4l4 4.2-4 4.2M17.2 644.4l4 4.2-4 4.2" fill="none" stroke="#444" stroke-width="1.3"/>
<!-- status -->
<g font-size="11" fill="#333" lengthAdjust="spacingAndGlyphs">
<text x="5.8" y="679.2" textLength="41">Running</text>
<text x="653.4" y="679.2" textLength="20.8">96%</text>
<text x="771" y="679.2" textLength="46.6">T=12.040</text>
<text x="1254.4" y="679.2" textLength="24.6" fill="#2b2b6c">ode4</text>
</g>
<defs><linearGradient id="gprog" x1="0" y1="0" x2="0" y2="1"><stop offset="0" stop-color="#e9ece6"/><stop offset=".5" stop-color="#d3d8cf"/><stop offset="1" stop-color="#c2c8be"/></linearGradient></defs>
<rect x="832.8" y="667.8" width="82" height="13.6" rx="2.2" fill="url(#gprog)" stroke="#a9ada6" stroke-width="1"/>
</svg>

<!-- LOGO -->
<svg class="abs" style="left:0;top:0" width="1280" height="720" viewBox="0 0 1280 720" font-family="Liberation Sans, sans-serif">
<!-- left word: peh-zheh-waw-heh -->
<g transform="translate(1064 594) scale(0.06114)" fill="none" stroke="#0a0a0a" stroke-linecap="round" stroke-linejoin="round">
<!-- heh -->
<path d="M212 258a100 100 0 1 0 0.1 0z" stroke-width="62.1"/>
<path d="M262 430h52v30h-52z" stroke-width="42.8" fill="#0a0a0a"/>
<!-- waw -->
<ellipse cx="520" cy="355" rx="96" ry="94" stroke-width="62.1"/>
<path d="M622 370Q640 470 590 520Q550 552 470 552" stroke-width="55.6"/>
<!-- zheh -->
<path d="M790 290L778 440Q770 520 640 548" stroke-width="59.9"/>
<!-- peh -->
<path d="M1010 300L1006 380Q1000 455 900 455L800 455" stroke-width="62.1"/>
</g>
<g transform="translate(1064 594) scale(0.06114)" fill="#0a0a0a">
<ellipse cx="755" cy="122" rx="24" ry="42"/>
<ellipse cx="700" cy="188" rx="22" ry="40" transform="rotate(-38 700 188)"/>
<ellipse cx="812" cy="188" rx="22" ry="40" transform="rotate(38 812 188)"/>
<ellipse cx="880" cy="542" rx="22" ry="38" transform="rotate(32 880 542)"/>
<ellipse cx="990" cy="542" rx="22" ry="38" transform="rotate(-32 990 542)"/>
<ellipse cx="935" cy="606" rx="23" ry="40"/>
</g>
<!-- right word: noon-gaf-alef-reh -->
<g transform="translate(1126 594) scale(0.06114)" fill="none" stroke="#0a0a0a" stroke-linecap="round" stroke-linejoin="round">
<path d="M256 285L246 430Q236 530 110 552" stroke-width="59.9"/>
<path d="M375 120V455H800" stroke-width="64.2" stroke-linejoin="miter"/>
<path d="M800 168L515 275L790 290Q885 300 880 375Q872 455 790 455" stroke-width="57.8"/>
<path d="M752 102L540 188" stroke-width="27.8"/>
<path d="M800 455Q900 470 1000 440Q1070 400 1082 300" stroke-width="59.9"/>
</g>
<ellipse cx="1060" cy="212" rx="24" ry="44" transform="translate(1126 594) scale(0.06114) rotate(28 1060 212)" fill="#0a0a0a"/>

<!-- puzzle -->
<g transform="translate(1195 574) scale(0.1)">
<!-- green -->
<path d="M370 48L522 208L376 356L218 206Z" fill="#1f9a52"/>
<circle cx="462" cy="112" r="26" fill="#1f9a52"/><circle cx="300" cy="120" r="0" fill="#1f9a52"/>
<circle cx="455" cy="290" r="24" fill="#1f9a52"/>
<!-- orange -->
<path d="M220 214L372 360L230 512L64 360Z" fill="#f7a61d"/>
<g fill="#f7a61d"><circle cx="118" cy="278" r="26"/><circle cx="176" cy="232" r="24"/><circle cx="84" cy="360" r="24"/><circle cx="120" cy="440" r="26"/><circle cx="180" cy="486" r="22"/><circle cx="290" cy="262" r="24"/><circle cx="300" cy="450" r="22"/></g>
<!-- purple -->
<path d="M532 214L688 360L540 516L386 360Z" fill="#7b40b2"/>
<g fill="#7b40b2"><circle cx="590" cy="248" r="24"/><circle cx="640" cy="290" r="24"/><circle cx="668" cy="362" r="22"/><circle cx="636" cy="440" r="24"/><circle cx="584" cy="486" r="22"/><circle cx="470" cy="300" r="20"/></g>
<!-- red -->
<path d="M376 374L522 520L370 678L224 526Z" fill="#d3210f"/>
<g fill="#d3210f"><circle cx="280" cy="596" r="24"/><circle cx="330" cy="650" r="22"/><circle cx="420" cy="646" r="22"/><circle cx="468" cy="592" r="24"/><circle cx="450" cy="430" r="24"/><circle cx="300" cy="470" r="20"/></g>
<!-- white seams -->
<path d="M220 210L376 358L528 212M376 358L226 520M376 366L524 518" fill="none" stroke="#f5f5f5" stroke-width="7" opacity=".85"/>
<!-- icons -->
<g fill="none" stroke="#9fe0b8" stroke-width="7" stroke-linecap="round"><circle cx="378" cy="140" r="11"/><path d="M378 155v70M378 165l-44 60M378 165l44 60M350 225v-20M406 225v-20"/></g>
<g fill="none" stroke="#fbd48a" stroke-width="7" stroke-linecap="round"><path d="M190 340q0-24 30-24t30 24q0 30-20 44v26M190 340v60q0 14 20 14"/></g>
<g fill="#f3eafa"><circle cx="548" cy="352" r="20"/><path d="M510 412q0-30 38-30t38 30z"/></g>
<g fill="none" stroke="#f3eafa" stroke-width="5"><path d="M548 318v-12M522 326l-8-8M574 326l8-8"/></g>
<g fill="none" stroke="#f6a89c" stroke-width="8" stroke-linecap="round"><path d="M345 496q-12 30 10 54t30 20M398 494q24 14 22 40t-16 30M372 500v48"/></g>
</g>
<!-- url -->
<text x="1064.2" y="654.7" font-size="15.4" font-weight="700" fill="#0e0e0e" textLength="180.2" lengthAdjust="spacingAndGlyphs">www.NegarPajooh.com</text>
</svg>

<!-- TASKBAR -->
<div id="taskbar"></div>
<svg class="abs" style="left:0;top:683px" width="1280" height="37" viewBox="0 683 1280 37" font-family="Liberation Sans, sans-serif">
<defs>
<linearGradient id="gbtn" x1="0" y1="0" x2="0" y2="1"><stop offset="0" stop-color="#72787f"/><stop offset=".1" stop-color="#50555c"/><stop offset=".5" stop-color="#33373d"/><stop offset=".53" stop-color="#1b1e23"/><stop offset="1" stop-color="#23272d"/></linearGradient><linearGradient id="gbtnhi" x1="0" y1="0" x2="1" y2="1"><stop offset="0" stop-color="#fff" stop-opacity=".22"/><stop offset=".45" stop-color="#fff" stop-opacity=".04"/><stop offset="1" stop-color="#fff" stop-opacity="0"/></linearGradient>
<linearGradient id="gbtna" x1="0" y1="0" x2="0" y2="1"><stop offset="0" stop-color="#d2d5d8"/><stop offset=".12" stop-color="#b4b8bc"/><stop offset=".5" stop-color="#9a9ea3"/><stop offset=".52" stop-color="#84888d"/><stop offset="1" stop-color="#9a9ea2"/></linearGradient>
<radialGradient id="gorb" cx=".5" cy=".95" r=".95"><stop offset="0" stop-color="#5fd8f8"/><stop offset=".3" stop-color="#2a8fd4"/><stop offset=".62" stop-color="#1a5fa8"/><stop offset="1" stop-color="#0f3a78"/></radialGradient>
<linearGradient id="gorbhi" x1="0" y1="0" x2="0" y2="1"><stop offset="0" stop-color="#cfe6f8" stop-opacity=".85"/><stop offset="1" stop-color="#6aa8dc" stop-opacity=".25"/></linearGradient>
<radialGradient id="gship" cx=".5" cy=".45" r=".6"><stop offset="0" stop-color="#4a48a8"/><stop offset=".8" stop-color="#35348c"/><stop offset="1" stop-color="#24236a"/></radialGradient>
<linearGradient id="gml" x1="0" y1="0" x2="1" y2="1"><stop offset="0" stop-color="#f7a23c"/><stop offset=".5" stop-color="#e5591a"/><stop offset="1" stop-color="#b32c10"/></linearGradient>
<linearGradient id="gshow" x1="0" y1="0" x2="0" y2="1"><stop offset="0" stop-color="#6a7078"/><stop offset=".5" stop-color="#30353c"/><stop offset="1" stop-color="#1a1d22"/></linearGradient>
</defs>

<!-- start orb -->
<circle cx="25.3" cy="702.6" r="17.6" fill="#0b2a55" opacity=".8"/>
<circle cx="25.3" cy="702.6" r="16.8" fill="url(#gorb)" stroke="#7fb6e6" stroke-width="1" stroke-opacity=".7"/>
<path d="M9.4 700a16 16 0 0 1 31.8 0q-16-5-31.8 0z" fill="url(#gorbhi)"/>
<path d="M17 692.8q4.400-2.400 8.600-.2l-1.600 7.600q-4-1.800-8.400.4z" fill="#e8642a"/>
<path d="M27.400 693.600q4.200 2.200 9 .2l-1.800 8q-4.400 1.800-8.800-.4z" fill="#8cc63e"/>
<path d="M15 702.800q4.200-2.200 8.400-.4l-1.600 7.800q-4.200-1.800-8.400.4z" fill="#3d9be0"/>
<path d="M25.200 703.600q4.400 2.200 8.800.4l-1.600 7.800q-4.600 1.800-8.800-.4z" fill="#f9c22e"/>

<!-- explorer button -->
<rect x="59.600" y="685.200" width="50.600" height="36" rx="2.500" fill="#2a2e34" stroke="#7c8188" stroke-width="1" opacity=".9"/>
<rect x="56.400" y="685.200" width="50.600" height="36" rx="2.500" fill="url(#gbtn)" stroke="#8a8f96" stroke-width="1"/><rect x="56.400" y="685.200" width="50.600" height="36" rx="2.500" fill="url(#gbtnhi)"/>
<path d="M66.400 716.400V691.600h9.600l2 2.600h18v22.200z" fill="#f2d67a"/>
<path d="M66.400 716.400V695.400h29.600v21z" fill="#f7e296"/>
<path d="M66.400 698h29.600" stroke="#e6c863" stroke-width="1"/>
<rect x="69.600" y="690.600" width="2.600" height="2.400" fill="#3fa34d"/><rect x="77.200" y="692.200" width="2.600" height="2.400" fill="#d9533a"/><rect x="84.800" y="693.600" width="2.600" height="2.400" fill="#3f8fc9"/>
<path d="M69.200 716.600v-8.600q0-2.600 2.600-2.600h18.800q2.600 0 2.600 2.600v8.600h-5v-5.800h-14v5.800z" fill="#5aa6e0"/>
<path d="M71.800 705.400h18.800q2.600 0 2.600 2.600v1.600h-24v-1.600q0-2.600 2.600-2.600z" fill="#8cc4ee"/>

<!-- MPC 321 -->
<g transform="rotate(-9 142 703)">
<rect x="131" y="699" width="23.4" height="15.6" rx="1" fill="#f4f4f0" stroke="#cfcfc8" stroke-width=".6"/>
<rect x="130.600" y="695.200" width="24.200" height="4" fill="#1c1c1c"/>
<path d="M133 695.200l1.800 4M138 695.200l1.800 4M143 695.200l1.800 4M148 695.200l1.800 4" stroke="#f0f0f0" stroke-width="2.200"/>
<g transform="rotate(-13 131 695)"><rect x="130.600" y="690.800" width="24.200" height="3.800" fill="#1c1c1c"/><path d="M133 690.800l1.800 3.800M138 690.800l1.800 3.800M143 690.800l1.800 3.800M148 690.800l1.800 3.800" stroke="#f0f0f0" stroke-width="2.200"/></g>
<text x="132.400" y="712.600" font-size="12.500" font-weight="700" fill="#e07a3a">3</text>
<text x="139.400" y="712.600" font-size="12.500" font-weight="700" fill="#3f7fd0">2</text>
<text x="146.400" y="712.600" font-size="12.500" font-weight="700" fill="#4d9a4a">1</text>
</g>

<!-- ship -->
<circle cx="199.700" cy="701.200" r="14.200" fill="url(#gship)"/>
<path d="M186.600 696a14 14 0 0 1 26.200 0q-13-6.400-26.200 0z" fill="#e8e8f6" opacity=".75"/>
<path d="M190.600 708.400h18.800q-1.400 5.600-9.400 6.400-8-.8-9.400-6.400z" fill="#f4f4fb"/>
<g fill="#fff"><path d="M193.200 692.600q2.800 1.200 2.800 4.200v1.400h-3.200zM192.600 699.400h3.600v6.400h-4.200zM197.600 690.200q3.200 1.400 3.200 5v2.200h-3.600zM197.200 698.600h4v7.400h-4.600zM202.400 692.600q3 1.200 3 4.400v1.200h-3.400zM202.200 699.400h3.800l.6 6.400h-4.400z"/></g>

<!-- chrome -->
<circle cx="258.900" cy="702.300" r="14.300" fill="#f7c52d"/>
<path d="M258.900 702.300L246.500 695.200A14.300 14.300 0 0 1 271.300 695.200Z" fill="#e24a36"/>
<path d="M258.900 702.300L271.300 695.200A14.300 14.300 0 0 0 246.500 695.200Z" fill="#e24a36"/>
<path d="M246.500 695.200A14.300 14.300 0 0 0 258.900 716.600L265.100 705.900L258.900 702.300Z" fill="#2d9e54"/>
<path d="M246.500 695.200L252.700 705.900L258.900 716.600A14.300 14.300 0 0 1 246.500 695.200Z" fill="#2d9e54"/>
<path d="M271.300 695.200H258.900L265.100 705.900L258.900 716.600A14.300 14.300 0 0 0 271.300 695.200Z" fill="#f7c52d"/>
<path d="M246.500 695.200H271.300A14.300 14.300 0 0 0 246.500 695.200Z" fill="#e24a36"/>
<circle cx="258.900" cy="702.300" r="6.500" fill="#f4f7fb"/>
<circle cx="258.900" cy="702.300" r="5.200" fill="#3f84e8"/>

<!-- labview -->
<rect x="303.600" y="689.200" width="27" height="26.800" fill="#dedede" stroke="#c8c8c8" stroke-width=".8"/>
<path d="M302.400 699.200h8M302.400 706.200h8M326.600 702.600h4.600" stroke="#7d9ac4" stroke-width="1.300"/>
<path d="M309.800 694.200l17.200 8.400-17.200 8.600z" fill="#f3c83a" stroke="#2a2a2a" stroke-width="1.300" stroke-linejoin="round"/>
<path d="M313.600 702.600h6M316.600 699.600v6" stroke="#1a1a1a" stroke-width="1.800"/>
<text x="320.600" y="714.600" font-size="6.500" font-weight="700" fill="#333">14</text>

<!-- IDM -->
<path d="M371 693.600q-12 6-9.600 14 3.400 7 14 5.600l2-3.600q-9 .6-10.600-4-1-5 6.800-9.600z" fill="#d9452c"/>
<path d="M372.800 696q-9.400 5-7.600 10.600 2 4.400 10.400 3.800l1.400-2.800q-6.800.2-7.800-3-.6-3.400 5.200-6.800z" fill="#f2c230"/>
<path d="M374 698.600q-6.600 3.400-5.400 7.200 1.400 3 7.400 2.600l1.400-2.400q-4.600.2-5.200-1.800-.4-2.200 3.400-4.400z" fill="#3aa648"/>
<path d="M362.600 709.600q4.400 5.600 13 3.800l1-2.600q-8.400 1.400-12.800-3.400z" fill="#2f74c8"/>
<circle cx="380.200" cy="696.800" r="9" fill="#3f86d8"/>
<path d="M373.400 692q4-4.600 9-3.600 2.400 3-1 5.600-2.800 1.800-2.400 5-3.600 1.200-6-1.600-.800-3 .4-5.400z" fill="#b8d44a"/>
<path d="M384 700.400q3-1.600 4.600.4-1.400 4-4.800 5-1.600-2.800.2-5.400z" fill="#7cc04a"/>
<circle cx="377.600" cy="692.800" r="3.400" fill="#f4f0a0" opacity=".6"/>
<path d="M370.400 703.400l19.600 1.200-5.400 3.400 1.600 4.200-5 2-1.800-4.200-5.800 3z" fill="#2fae3a" stroke="#1c7a26" stroke-width=".6"/>

<!-- word -->
<path d="M421.600 688.400h21.600l3 3v22.400h-26.600z" fill="#e8f0fb"/>
<path d="M419.600 688.400h23.600v9.600h-23.600z" fill="#d8e6f8"/>
<path d="M419.600 701.600h26.600v12.200h-26.600z" fill="#f4f8fd"/>
<text x="421.600" y="707" font-size="21" font-weight="700" fill="#1c58ac" stroke="#1c58ac" stroke-width=".5" textLength="20.600" lengthAdjust="spacingAndGlyphs">W</text>
<path d="M437.400 704.400l9.400 2.200-1.800 8-9.400-2z" fill="#fbfcfe" stroke="#d0dcec" stroke-width=".5"/>
<path d="M424 709.600h11M424 711.800h9" stroke="#c4d2e6" stroke-width=".8"/>

<!-- telegram button -->
<rect x="465.400" y="685.200" width="54.600" height="36" rx="2.500" fill="url(#gbtn)" stroke="#868b92" stroke-width="1"/><rect x="465.400" y="685.200" width="54.600" height="36" rx="2.500" fill="url(#gbtnhi)"/>
<circle cx="492.500" cy="701.600" r="13.800" fill="#2b96d9"/>
<path d="M483.200 701.400l15.800-6.600-2.600 13.400-4.600-3.400-2.400 2.400-.4-4z" fill="#f4f9fd"/>
<path d="M489 703.200l8.400-6.800-6.200 8.200-.2 2.600z" fill="#c4dcee"/>
<rect x="492.600" y="707.200" width="15" height="9.400" rx="1" fill="#8b9096" stroke="#b5b9be" stroke-width=".6"/>
<text x="494" y="714.800" font-size="7.500" font-weight="700" fill="#d9dce0" textLength="12.200" lengthAdjust="spacingAndGlyphs">545</text>

<!-- proton button -->
<rect x="523.400" y="685.200" width="54.600" height="36" rx="2.500" fill="url(#gbtn)" stroke="#868b92" stroke-width="1"/><rect x="523.400" y="685.200" width="54.600" height="36" rx="2.500" fill="url(#gbtnhi)"/>
<circle cx="550.600" cy="702.200" r="15" fill="#4da866"/>
<path d="M543.800 699.800L555.600 695.400L551.300 709Z" fill="none" stroke="#f2faf4" stroke-width="1.500" stroke-linejoin="round"/>
<circle cx="543.800" cy="699.800" r="1.900" fill="#f2faf4"/><circle cx="555.600" cy="695.400" r="1.900" fill="#f2faf4"/><circle cx="551.300" cy="709" r="1.900" fill="#f2faf4"/>

<!-- sticky notes button -->
<rect x="582" y="685.200" width="54.400" height="36" rx="2.500" fill="url(#gbtn)" stroke="#868b92" stroke-width="1"/><rect x="582" y="685.200" width="54.400" height="36" rx="2.500" fill="url(#gbtnhi)"/>
<rect x="596" y="692" width="14.600" height="15.400" fill="#9fd48e" transform="rotate(14 603 700)"/>
<rect x="601.600" y="696" width="13" height="15" fill="#a8d8f2" transform="rotate(6 608 703)"/>
<rect x="606.600" y="695.600" width="16" height="16" fill="#f8dc62" transform="rotate(-18 614.600 703.600)"/>

<!-- matlab button (active) -->
<rect x="643" y="685.200" width="47.600" height="36" rx="2.500" fill="#3a3e44" stroke="#8a8f96" stroke-width="1"/>
<rect x="640" y="685.200" width="47.600" height="36" rx="2.500" fill="url(#gbtna)" stroke="#d4d7da" stroke-width="1"/>
<path d="M649.600 704.800l10-6.400 4.400 3-6.600 8.600z" fill="#3f86c8"/>
<path d="M659.600 698.400l4.600-2.600 3.400-5 1.800-2.200-5.400 13z" fill="#2b5e96"/>
<path d="M657.400 710l6.600-8.600q3-9 5.400-12.800 1.400 0 3 4.600 2.600 8.400 5.600 13.400-2.400-1.800-4.400-1-3 1.800-6.400 7.800-2.400 4-4 1.200-1.800-3.600-5.800-4.600z" fill="url(#gml)"/>
<path d="M669.400 688.600q1.400 0 3 4.600 2.600 8.400 5.600 13.400-2.400-1.800-4.400-1-1.600-9.600-4.200-17z" fill="#a02a10" opacity=".55"/>

<!-- tray -->
<text x="1066.800" y="704" font-size="10.500" fill="#f2f2f2" textLength="13.600" lengthAdjust="spacingAndGlyphs">EN</text>
<path d="M1096 705.200h7.800l-3.900-3.900z" fill="#f0f0f0"/>
<!-- flag -->
<path d="M1117 696.800v13.400" stroke="#d8d8d8" stroke-width="1.300"/>
<path d="M1117.800 697q3-1.400 5.400 0t5 0v6.600q-2.600 1.400-5 0t-5.400 0z" fill="#f2f2f2"/>
<circle cx="1126.400" cy="706.600" r="3.900" fill="#d8362a"/>
<path d="M1124.600 704.800l3.600 3.600M1128.200 704.800l-3.600 3.600" stroke="#fff" stroke-width="1.200"/>
<!-- power -->
<rect x="1139.400" y="698.600" width="8.400" height="11.400" rx="1" fill="#c9c9c9" stroke="#e8e8e8" stroke-width=".7"/>
<path d="M1146.400 697.200v3M1150 697.200v3M1145.200 700.200h6v3q0 2-3 2t-3-2zM1148.200 705.200v4" stroke="#f0f0f0" stroke-width="1.200" fill="#e6e6e6"/>
<circle cx="1142.600" cy="706.400" r="3.700" fill="#d8362a"/>
<path d="M1140.900 704.700l3.400 3.400M1144.300 704.700l-3.400 3.400" stroke="#fff" stroke-width="1.100"/>
<!-- signal -->
<g fill="#f0f0f0"><rect x="1160.600" y="706.200" width="2" height="2.200"/><rect x="1163.700" y="704.200" width="2" height="4.200"/><rect x="1166.800" y="702" width="2" height="6.400"/><rect x="1169.900" y="699.800" width="2" height="8.600"/><rect x="1173" y="697.800" width="2" height="10.600"/></g>
<!-- speaker -->
<path d="M1183.400 701.200h3l4.200-3.800v12.400l-4.200-3.800h-3z" fill="#f2f2f2"/>
<path d="M1192.600 700.800q1.800 2.800 0 5.600M1194.800 698.800q3 4.800 0 9.600" fill="none" stroke="#e0e0e0" stroke-width="1.100"/>
<!-- clock -->
<g font-size="11.500" fill="#f4f4f4" lengthAdjust="spacingAndGlyphs">
<text x="1219.200" y="699.800" textLength="39.400">7:11 PM</text>
<text x="1213.800" y="715" textLength="47.600">3/26/2021</text>
</g>
<!-- show desktop -->
<rect x="1272.500" y="684" width="8" height="37" fill="url(#gshow)" stroke="#5a5f66" stroke-width="1"/>
</svg>


</div>
</body>
</html>
